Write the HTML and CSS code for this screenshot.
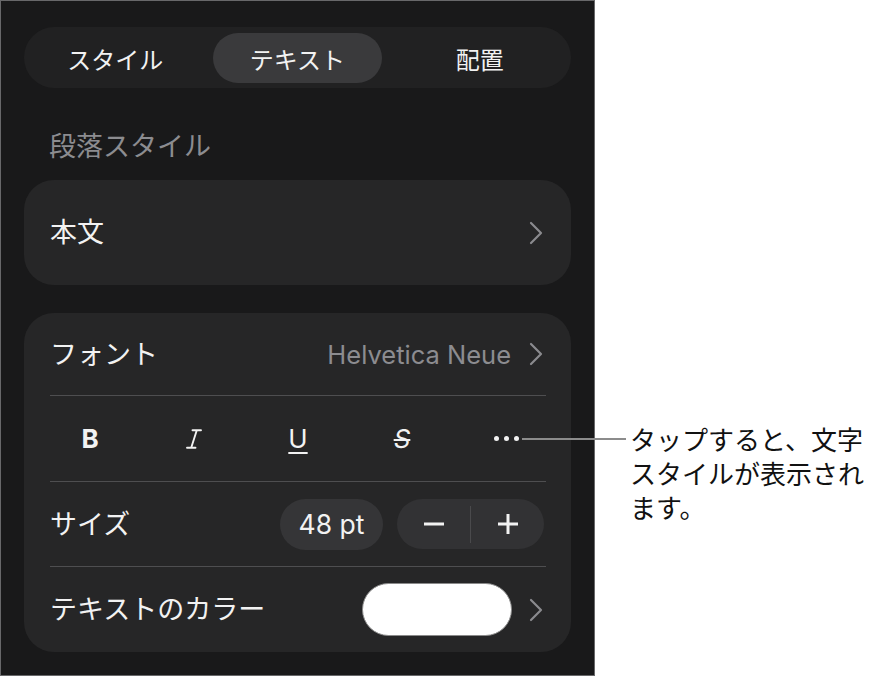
FILE: index.html
```html
<!DOCTYPE html>
<html lang="ja">
<head>
<meta charset="utf-8">
<title>テキスト</title>
<link rel="stylesheet" href="styles.css">
</head>
<body>
<div class="page">
  <div class="panel">
    <div class="seg">
      <div class="seg-item">スタイル</div>
      <div class="seg-item active">テキスト</div>
      <div class="seg-item">配置</div>
    </div>

    <div class="section-label">段落スタイル</div>

    <div class="card card-style">
      <div class="row row-style">
        <span class="row-label">本文</span>
        <svg class="chev" width="14" height="24" viewBox="0 0 14 24"><polyline points="2,2 12,12 2,22" /></svg>
      </div>
    </div>

    <div class="card card-text">
      <div class="row row-font">
        <span class="row-label">フォント</span>
        <span class="value">Helvetica Neue</span>
        <svg class="chev" width="14" height="24" viewBox="0 0 14 24"><polyline points="2,2 12,12 2,22" /></svg>
      </div>
      <div class="divider"></div>
      <div class="format-row">
        <div class="fmt"><span class="fmt-b">B</span></div>
        <div class="fmt">
          <svg width="16" height="20" viewBox="0 0 16 20" class="fmt-i"><path d="M6.5 1.2 H15 M1 18.8 H9.5 M10.8 1.2 L5.2 18.8" /></svg>
        </div>
        <div class="fmt"><span class="fmt-u">U</span></div>
        <div class="fmt"><span class="fmt-s">S</span></div>
        <div class="fmt fmt-more">
          <span class="dots"><i></i><i></i><i></i></span>
          <span class="connector"></span>
        </div>
      </div>
      <div class="divider"></div>
      <div class="row row-size">
        <span class="row-label">サイズ</span>
        <span class="size-pill">48 pt</span>
        <div class="stepper">
          <span class="step">
            <svg width="22" height="22" viewBox="0 0 22 22"><path d="M1 11 H21" /></svg>
          </span>
          <span class="step-sep"></span>
          <span class="step">
            <svg width="22" height="22" viewBox="0 0 22 22"><path d="M1 11 H21 M11 1 V21" /></svg>
          </span>
        </div>
      </div>
      <div class="divider"></div>
      <div class="row row-color">
        <span class="row-label">テキストのカラー</span>
        <span class="swatch"></span>
        <svg class="chev" width="14" height="24" viewBox="0 0 14 24"><polyline points="2,2 12,12 2,22" /></svg>
      </div>
    </div>
  </div>

  <div class="callout">タップすると、文字<br>スタイルが表示され<br>ます。</div>
</div>
</body>
</html>
```

FILE: styles.css
```css
html, body {
  margin: 0;
  padding: 0;
  background: #ffffff;
}

body {
  font-family: Inter, "Noto Sans CJK JP", sans-serif;
  -webkit-font-smoothing: antialiased;
}

.page {
  display: flex;
  align-items: flex-start;
}

.panel {
  box-sizing: border-box;
  width: 595px;
  height: 676px;
  flex: none;
  border: 1px solid #68686a;
  background: #19191a;
  padding: 26px 23px 0;
}

/* segmented control */
.seg {
  display: grid;
  grid-template-columns: repeat(3, 1fr);
  box-sizing: border-box;
  height: 61px;
  padding: 6px 0 5px;
  background: #212122;
  border-radius: 31px;
}

.seg-item {
  margin: 0 7px;
  display: flex;
  align-items: center;
  justify-content: center;
  border-radius: 25px;
  color: #f2f2f2;
  font-family: "Noto Sans CJK JP", sans-serif;
  font-size: 24px;
}

.seg-item.active {
  background: #3a3a3c;
}

.section-label {
  margin-top: 40px;
  padding-left: 25px;
  font-family: "Noto Sans CJK JP", sans-serif;
  font-size: 27px;
  line-height: 34px;
  color: #8c8c90;
}

/* cards */
.card {
  background: #262627;
  border-radius: 30px;
}

.card-style {
  margin-top: 18px;
}

.card-text {
  margin-top: 28px;
}

.row {
  display: flex;
  align-items: center;
  padding: 0 28px 0 26px;
  color: #f2f2f2;
  font-size: 25.5px;
}

.row-label {
  flex: 1;
  white-space: nowrap;
  font-family: "Noto Sans CJK JP", sans-serif;
  font-size: 27px;
  line-height: 34px;
  margin-top: -3px;
}

.row-style {
  height: 105px;
}

.row-font {
  height: 82px;
}

.row-size {
  height: 84px;
  padding-right: 27px;
}

.row-color {
  height: 85px;
}

.value {
  color: #8c8c90;
  margin-right: 18px;
}

.chev {
  flex: none;
  fill: none;
  stroke: #8a8a8e;
  stroke-width: 2.2;
  stroke-linecap: round;
  stroke-linejoin: round;
}

.divider {
  height: 1px;
  background: #4e4e50;
  margin: 0 25px 0 26px;
}

/* format buttons */
.format-row {
  display: grid;
  grid-template-columns: repeat(5, 1fr);
  height: 85px;
  padding: 0 13px 0 14px;
  color: #f2f2f2;
}

.fmt {
  display: flex;
  align-items: center;
  justify-content: center;
}

.fmt-b {
  font-weight: 700;
  font-size: 26px;
}

.fmt-i {
  fill: none;
  stroke: #f2f2f2;
  stroke-width: 1.9;
  stroke-linecap: round;
}

.fmt-u {
  font-size: 26px;
  text-decoration: underline;
  text-decoration-thickness: 2px;
  text-underline-offset: 4px;
}

.fmt-s {
  font-size: 26px;
  font-style: italic;
  text-decoration: line-through;
  text-decoration-thickness: 2px;
}

.fmt-more {
  position: relative;
}

.dots {
  display: flex;
  gap: 5px;
}

.dots i {
  display: block;
  width: 5px;
  height: 5px;
  border-radius: 50%;
  background: #f2f2f2;
}

.connector {
  position: absolute;
  left: calc(50% + 16px);
  top: calc(50% - 1px);
  width: 104px;
  height: 2px;
  background: #8c8c8c;
}

/* size controls */
.size-pill {
  flex: none;
  box-sizing: border-box;
  width: 103px;
  height: 51px;
  border-radius: 26px;
  background: #353537;
  display: flex;
  align-items: center;
  justify-content: center;
  font-size: 26.5px;
  margin-right: 14px;
}

.stepper {
  flex: none;
  width: 147px;
  height: 50px;
  border-radius: 25px;
  background: #323234;
  display: flex;
  align-items: center;
}

.step {
  flex: 1;
  display: flex;
  align-items: center;
  justify-content: center;
}

.step svg {
  fill: none;
  stroke: #f2f2f2;
  stroke-width: 3;
}

.step-sep {
  width: 1px;
  height: 37px;
  background: #4a4a4c;
}

.swatch {
  flex: none;
  box-sizing: border-box;
  width: 150px;
  height: 53px;
  border-radius: 27px;
  background: #ffffff;
  border: 1.5px solid #8a8a8a;
  margin-right: 17px;
}

/* callout */
.callout {
  margin-top: 422px;
  margin-left: 35px;
  font-family: "Noto Sans CJK JP", sans-serif;
  font-size: 26px;
  line-height: 34px;
  color: #111111;
  white-space: nowrap;
}
```
